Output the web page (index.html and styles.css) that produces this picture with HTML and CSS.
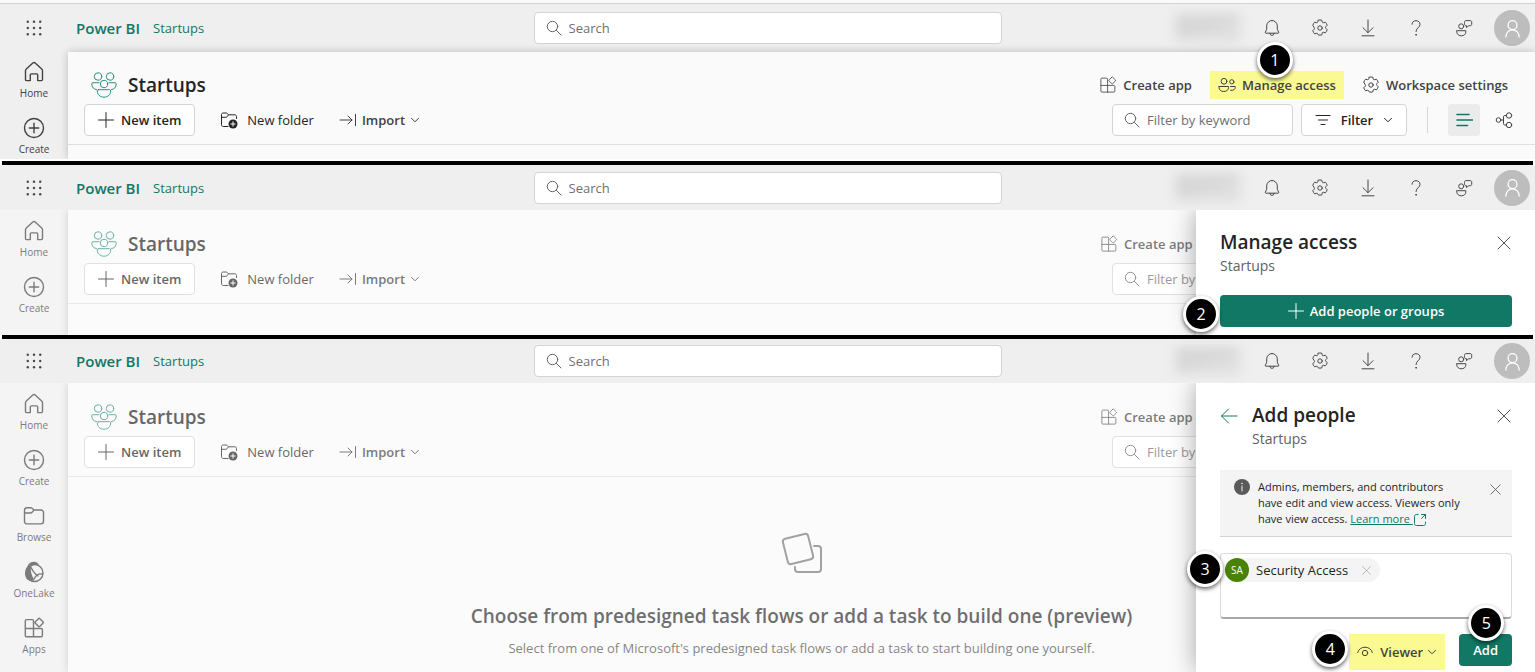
FILE: index.html
```html
<!DOCTYPE html>
<html lang="en">
<head>
    <meta charset="UTF-8">
    <meta name="viewport" content="width=device-width, initial-scale=1.0">
    <title>Power BI - Manage access</title>
    <link rel="stylesheet" href="styles.css">
</head>
<body>
    <!-- Shared icons -->
    <svg class="sprite" aria-hidden="true">
        <symbol id="i-waffle" viewBox="0 0 16 16"><g fill="currentColor" stroke="none"><circle cx="1.8" cy="1.8" r="1.2"/><circle cx="8" cy="1.8" r="1.2"/><circle cx="14.2" cy="1.8" r="1.2"/><circle cx="1.8" cy="8" r="1.2"/><circle cx="8" cy="8" r="1.2"/><circle cx="14.2" cy="8" r="1.2"/><circle cx="1.8" cy="14.2" r="1.2"/><circle cx="8" cy="14.2" r="1.2"/><circle cx="14.2" cy="14.2" r="1.2"/></g></symbol>
        <symbol id="i-search" viewBox="0 0 16 16"><circle cx="6.5" cy="6.5" r="5.2"/><path d="M10.4 10.4l4.6 4.6"/></symbol>
        <symbol id="i-bell" viewBox="0 0 18 18"><path d="M9 1.500a5.300 5.300 0 0 0-5.300 5.300v3.500L2.300 13.300c-.2.500 0 .9.600.9h12.200c.6 0 .8-.4.6-.9l-1.400-3V6.800A5.300 5.300 0 0 0 9 1.500zM6.900 14.300a2.100 2.100 0 0 0 4.200 0"/></symbol>
        <symbol id="i-gear" viewBox="0 0 18 18"><circle cx="9" cy="9" r="2.200"/><path d="M7.200 1.200Q9 .7 10.800 1.200L11.200 3q.3.900 1.300.7l1.900-.5q1.300 1.300 1.800 3.100l-1.400 1.400q-.7.800 0 1.500l1.400 1.500q-.5 1.800-1.800 3.100l-1.900-.5q-1-.2-1.300.7l-.4 1.900q-1.800.5-3.600 0L6.800 15q-.3-.9-1.300-.7l-1.900.5Q2.300 13.500 1.800 11.700l1.400-1.500q.7-.7 0-1.500L1.800 6.300Q2.300 4.500 3.600 3.200l1.900.5q1 .2 1.300-.7z"/></symbol>
        <symbol id="i-download" viewBox="0 0 18 18"><path d="M9 1v12.500M4 8.700l5 5 5-5M3 16.800h12"/></symbol>
        <symbol id="i-help" viewBox="0 0 18 18"><path d="M5 5.300C5 3 6.700 1.700 9 1.700s4 1.400 4 3.600c0 3.200-4 3.500-4 7.200"/><circle cx="9" cy="15.800" r=".4" fill="currentColor"/></symbol>
        <symbol id="i-feedback" viewBox="0 0 18 18"><circle cx="6.200" cy="7.300" r="2.500"/><path d="M1.800 11.700h9v1.500c0 2-1.900 3.600-4.500 3.600s-4.500-1.600-4.500-3.600zM9.500 3.200c0-1 .6-1.600 1.600-1.600h4c1 0 1.600.6 1.600 1.600v1.900c0 1-.6 1.600-1.600 1.600h-1.300l-2.300 1.900V6.700h-.4c-1 0-1.600-.6-1.600-1.600z"/></symbol>
        <symbol id="i-person" viewBox="0 0 20 20"><circle cx="10" cy="6.500" r="4.700"/><path d="M3 19c0-4.500 3-7.500 7-7.500s7 3 7 7.500"/></symbol>
        <symbol id="i-home" viewBox="0 0 22 22"><path d="M2.500 9.600c0-.7.300-1.200.8-1.600l6.500-5.900a1.800 1.800 0 0 1 2.400 0L18.700 8c.5.400.8.900.8 1.600v9c0 .6-.4 1-1 1h-3.800V14c0-.6-.5-1.100-1.100-1.100H8.400c-.6 0-1.100.5-1.100 1.100v5.600H3.500c-.6 0-1-.4-1-1z"/></symbol>
        <symbol id="i-create" viewBox="0 0 22 22"><circle cx="11" cy="11" r="9.500"/><path d="M11 6.300v9.400M6.300 11h9.400"/></symbol>
        <symbol id="i-folder" viewBox="0 0 22 22"><path d="M1.500 5.300A2.600 2.600 0 0 1 4.100 2.700h3.500c.6 0 1.100.2 1.500.6L11 5h6.900a2.600 2.600 0 0 1 2.600 2.600v8.700a2.600 2.600 0 0 1-2.600 2.600H4.100a2.600 2.600 0 0 1-2.600-2.600zM1.500 8h6c.6 0 1-.2 1.500-.6L11 5"/></symbol>
        <symbol id="i-onelake" viewBox="0 0 22 22"><circle cx="11.500" cy="12" r="8.500"/><path d="M5 19C1.500 16.500 1 10 4 6 5.500 2 9 .300 12.500 1c2 .5 3 1.500 3.500 3-3.200-.8-6-.3-8 2-.8 4 .5 8.500 3.500 13-2.500 1.300-4.500 1-6.500 0z" fill="currentColor" stroke="none"/><path d="M8 6.500c2 4 4.500 7 7 8.500M11.500 17.500c1.500-3.500 4.500-5 8-4.500"/></symbol>
        <symbol id="i-apps" viewBox="0 0 22 22"><path d="M10.500 19.700V3.800c0-.7-.5-1.200-1.200-1.200H3.500c-.7 0-1.200.5-1.200 1.200v14.700c0 .7.500 1.200 1.200 1.200h14.700c.7 0 1.200-.5 1.200-1.200v-5.800c0-.7-.5-1.200-1.200-1.200H2.300M15.400 1.700l-3 3c-.5.500-.5 1 0 1.500l3 3c.5.500 1 .5 1.500 0l3-3c.5-.5.5-1 0-1.500l-3-3c-.5-.5-1-.5-1.500 0z"/></symbol>
        <symbol id="i-team" viewBox="0 0 26 26"><circle cx="7" cy="4.500" r="3.700"/><circle cx="19" cy="4.500" r="3.700"/><circle cx="13" cy="12" r="3.700"/><path d="M8 10.700H2c-.8 0-1.200.4-1.200 1.200 0 3.300 1.700 5.300 4.700 5.700M18 10.700h6c.8 0 1.200.4 1.200 1.200 0 3.300-1.700 5.300-4.700 5.700M7.500 17.700h11c.7 0 1.200.4 1.200 1.200 0 3.500-2.700 6.300-6.700 6.300s-6.700-2.800-6.700-6.300c0-.8.500-1.200 1.200-1.200z"/></symbol>
        <symbol id="i-plus" viewBox="0 0 16 16"><path d="M8 .5v15M.5 8h15"/></symbol>
        <symbol id="i-newfolder" viewBox="0 0 18 18"><path d="M8 15.500H3.200c-1 0-1.700-.7-1.700-1.700V3.700c0-1 .7-1.700 1.700-1.700H6c.5 0 .9.200 1.200.5l1.300 1.300h6.300c1 0 1.700.7 1.700 1.700v2M1.500 6.300h4.300c.5 0 .9-.2 1.200-.5l1.500-2"/><circle cx="13" cy="13" r="4.500" fill="currentColor" stroke="none"/><path d="M13 10.800v4.400M10.800 13h4.400" stroke="#fafafa"/></symbol>
        <symbol id="i-import" viewBox="0 0 18 18"><path d="M1 9h12M9 5l4 4-4 4M16.500 3.500v11"/></symbol>
        <symbol id="i-chevron" viewBox="0 0 10 10"><path d="M1.500 3.300L5 6.800l3.500-3.500"/></symbol>
        <symbol id="i-people" viewBox="0 0 18 18"><circle cx="6" cy="5.300" r="2.900"/><circle cx="13.800" cy="5.800" r="2.100"/><path d="M1 10.500h9.500v1.200c0 2.300-2 3.800-4.700 3.800S1 14 1 11.700zM12.500 10.500h4.700v1c0 1.900-1.700 3.300-4.700 2.800"/></symbol>
        <symbol id="i-filter" viewBox="0 0 16 16"><path d="M1 3.500h14M3.500 8h9M6 12.500h4"/></symbol>
        <symbol id="i-list" viewBox="0 0 18 18"><path d="M2 3.500h12M2 9h15.500M2 14.500h10.500"/></symbol>
        <symbol id="i-lineage" viewBox="0 0 18 18"><circle cx="3.500" cy="9" r="2.300"/><circle cx="14" cy="4.500" r="2.700"/><circle cx="14" cy="14" r="2.700"/><path d="M11.300 4.500H9.800c-.8 0-1.300.5-1.300 1.300v6.900c0 .8.500 1.300 1.300 1.300h1.500M5.800 9h2.700"/></symbol>
        <symbol id="i-close" viewBox="0 0 14 14"><path d="M1 1l12 12M13 1L1 13"/></symbol>
        <symbol id="i-back" viewBox="0 0 18 18"><path d="M17 9H1.500M8.500 2l-7 7 7 7"/></symbol>
        <symbol id="i-info" viewBox="0 0 16 16"><circle cx="8" cy="8" r="8" fill="currentColor" stroke="none"/><path d="M8 7v5" stroke="#f4f4f4"/><circle cx="8" cy="4.500" r=".8" fill="#f4f4f4" stroke="none"/></symbol>
        <symbol id="i-external" viewBox="0 0 14 14"><path d="M5 1.500H3.300c-1 0-1.800.8-1.800 1.800v7.400c0 1 .8 1.800 1.800 1.800h7.400c1 0 1.800-.8 1.800-1.800V9M8.500 1.500h4v4M12.500 1.500l-4 4"/></symbol>
        <symbol id="i-eye" viewBox="0 0 16 16"><path d="M.7 8.500C1.500 5.300 4.400 3.200 8 3.200s6.500 2.100 7.300 5.300"/><circle cx="8" cy="9" r="2.700"/></symbol>
        <symbol id="i-flow" viewBox="0 0 42 42"><rect x="4" y="4" width="26" height="26" rx="3" transform="rotate(-14 17 17)"/><path d="M33 14h4c2 0 3 1 3 3v20c0 2-1 3-3 3H17c-2 0-3-1-3-3v-2"/></symbol>
    </svg>

    <div class="page">
        <!-- Step 1: open manage access -->
        <section class="shot shot-first">
            <header class="topbar">
                <div class="brand">
                    <button class="icon-btn waffle" aria-label="Apps menu"><svg><use href="#i-waffle"/></svg></button>
                    <a class="logo" href="#">Power BI</a>
                    <a class="crumb" href="#">Startups</a>
                </div>
                <label class="search"><svg><use href="#i-search"/></svg><input type="text" placeholder="Search" aria-label="Search"></label>
                <div class="top-actions">
                    <span class="tenant"></span>
                    <button class="icon-btn" aria-label="Notifications"><svg><use href="#i-bell"/></svg></button>
                    <button class="icon-btn" aria-label="Settings"><svg><use href="#i-gear"/></svg></button>
                    <button class="icon-btn" aria-label="Download"><svg><use href="#i-download"/></svg></button>
                    <button class="icon-btn" aria-label="Help"><svg><use href="#i-help"/></svg></button>
                    <button class="icon-btn" aria-label="Feedback"><svg><use href="#i-feedback"/></svg></button>
                    <button class="icon-btn" aria-label="Account"><span class="avatar"><svg><use href="#i-person"/></svg></span></button>
                </div>
            </header>
            <div class="body">
                <nav class="rail">
                    <a href="#"><svg><use href="#i-home"/></svg>Home</a>
                    <a href="#"><svg><use href="#i-create"/></svg>Create</a>
                </nav>
                <main class="workspace">
                    <div class="title-row">
                        <svg class="team"><use href="#i-team"/></svg>
                        <h1>Startups</h1>
                        <div class="title-actions">
                            <button class="link-btn"><svg><use href="#i-apps"/></svg>Create app</button>
                            <button class="link-btn highlight"><svg><use href="#i-people"/></svg>Manage access<span class="step step-1">1</span></button>
                            <button class="link-btn"><svg><use href="#i-gear"/></svg>Workspace settings</button>
                        </div>
                    </div>
                    <div class="toolbar">
                        <button class="box-btn"><svg><use href="#i-plus"/></svg>New item</button>
                        <button class="flat-btn regular"><svg><use href="#i-newfolder"/></svg>New folder</button>
                        <button class="flat-btn import"><svg><use href="#i-import"/></svg>Import<svg class="chev"><use href="#i-chevron"/></svg></button>
                        <div class="tools">
                            <label class="keyword"><svg><use href="#i-search"/></svg><input type="text" placeholder="Filter by keyword" aria-label="Filter by keyword"></label>
                            <button class="box-btn filter"><svg><use href="#i-filter"/></svg>Filter<svg class="chev"><use href="#i-chevron"/></svg></button>
                            <span class="sep"></span>
                            <button class="view-btn active" aria-label="List view"><svg><use href="#i-list"/></svg></button>
                            <button class="view-btn" aria-label="Lineage view"><svg><use href="#i-lineage"/></svg></button>
                        </div>
                    </div>
                </main>
            </div>
        </section>

        <hr class="divider">

        <!-- Step 2: manage access panel -->
        <section class="shot shot-second">
            <header class="topbar">
                <div class="brand">
                    <button class="icon-btn waffle" aria-label="Apps menu"><svg><use href="#i-waffle"/></svg></button>
                    <a class="logo" href="#">Power BI</a>
                    <a class="crumb" href="#">Startups</a>
                </div>
                <label class="search"><svg><use href="#i-search"/></svg><input type="text" placeholder="Search" aria-label="Search"></label>
                <div class="top-actions">
                    <span class="tenant"></span>
                    <button class="icon-btn" aria-label="Notifications"><svg><use href="#i-bell"/></svg></button>
                    <button class="icon-btn" aria-label="Settings"><svg><use href="#i-gear"/></svg></button>
                    <button class="icon-btn" aria-label="Download"><svg><use href="#i-download"/></svg></button>
                    <button class="icon-btn" aria-label="Help"><svg><use href="#i-help"/></svg></button>
                    <button class="icon-btn" aria-label="Feedback"><svg><use href="#i-feedback"/></svg></button>
                    <button class="icon-btn" aria-label="Account"><span class="avatar"><svg><use href="#i-person"/></svg></span></button>
                </div>
            </header>
            <div class="body dimmed">
                <nav class="rail">
                    <a href="#"><svg><use href="#i-home"/></svg>Home</a>
                    <a href="#"><svg><use href="#i-create"/></svg>Create</a>
                </nav>
                <main class="workspace">
                    <div class="title-row">
                        <svg class="team"><use href="#i-team"/></svg>
                        <h1>Startups</h1>
                        <div class="title-actions behind">
                            <button class="link-btn"><svg><use href="#i-apps"/></svg>Create app</button>
                        </div>
                    </div>
                    <div class="toolbar">
                        <button class="box-btn"><svg><use href="#i-plus"/></svg>New item</button>
                        <button class="flat-btn regular"><svg><use href="#i-newfolder"/></svg>New folder</button>
                        <button class="flat-btn import"><svg><use href="#i-import"/></svg>Import<svg class="chev"><use href="#i-chevron"/></svg></button>
                        <div class="tools behind">
                            <label class="keyword"><svg><use href="#i-search"/></svg><input type="text" placeholder="Filter by keyword" aria-label="Filter by keyword"></label>
                        </div>
                    </div>
                </main>
                <aside class="panel">
                    <div class="panel-head">
                        <div>
                            <h2>Manage access</h2>
                            <p>Startups</p>
                        </div>
                        <button class="close" aria-label="Close"><svg><use href="#i-close"/></svg></button>
                    </div>
                    <button class="primary wide"><svg><use href="#i-plus"/></svg>Add people or groups<span class="step step-2">2</span></button>
                </aside>
            </div>
        </section>

        <hr class="divider">

        <!-- Step 3: add people panel -->
        <section class="shot shot-third">
            <header class="topbar">
                <div class="brand">
                    <button class="icon-btn waffle" aria-label="Apps menu"><svg><use href="#i-waffle"/></svg></button>
                    <a class="logo" href="#">Power BI</a>
                    <a class="crumb" href="#">Startups</a>
                </div>
                <label class="search"><svg><use href="#i-search"/></svg><input type="text" placeholder="Search" aria-label="Search"></label>
                <div class="top-actions">
                    <span class="tenant"></span>
                    <button class="icon-btn" aria-label="Notifications"><svg><use href="#i-bell"/></svg></button>
                    <button class="icon-btn" aria-label="Settings"><svg><use href="#i-gear"/></svg></button>
                    <button class="icon-btn" aria-label="Download"><svg><use href="#i-download"/></svg></button>
                    <button class="icon-btn" aria-label="Help"><svg><use href="#i-help"/></svg></button>
                    <button class="icon-btn" aria-label="Feedback"><svg><use href="#i-feedback"/></svg></button>
                    <button class="icon-btn" aria-label="Account"><span class="avatar"><svg><use href="#i-person"/></svg></span></button>
                </div>
            </header>
            <div class="body dimmed">
                <nav class="rail">
                    <a href="#"><svg><use href="#i-home"/></svg>Home</a>
                    <a href="#"><svg><use href="#i-create"/></svg>Create</a>
                    <a href="#"><svg><use href="#i-folder"/></svg>Browse</a>
                    <a href="#"><svg><use href="#i-onelake"/></svg>OneLake</a>
                    <a href="#"><svg><use href="#i-apps"/></svg>Apps</a>
                </nav>
                <main class="workspace">
                    <div class="title-row">
                        <svg class="team"><use href="#i-team"/></svg>
                        <h1>Startups</h1>
                        <div class="title-actions behind">
                            <button class="link-btn"><svg><use href="#i-apps"/></svg>Create app</button>
                        </div>
                    </div>
                    <div class="toolbar">
                        <button class="box-btn"><svg><use href="#i-plus"/></svg>New item</button>
                        <button class="flat-btn regular"><svg><use href="#i-newfolder"/></svg>New folder</button>
                        <button class="flat-btn import"><svg><use href="#i-import"/></svg>Import<svg class="chev"><use href="#i-chevron"/></svg></button>
                        <div class="tools behind">
                            <label class="keyword"><svg><use href="#i-search"/></svg><input type="text" placeholder="Filter by keyword" aria-label="Filter by keyword"></label>
                        </div>
                    </div>
                    <div class="empty">
                        <svg><use href="#i-flow"/></svg>
                        <h3>Choose from predesigned task flows or add a task to build one (preview)</h3>
                        <p>Select from one of Microsoft's predesigned task flows or add a task to start building one yourself.</p>
                    </div>
                </main>
                <aside class="panel">
                    <div class="panel-head">
                        <button class="back" aria-label="Back"><svg><use href="#i-back"/></svg></button>
                        <div>
                            <h2>Add people</h2>
                            <p>Startups</p>
                        </div>
                        <button class="close" aria-label="Close"><svg><use href="#i-close"/></svg></button>
                    </div>
                    <div class="notice">
                        <svg class="info"><use href="#i-info"/></svg>
                        <p>Admins, members, and contributors<br>have edit and view access. Viewers only<br>have view access. <a href="#">Learn more <svg><use href="#i-external"/></svg></a></p>
                        <button class="close small" aria-label="Dismiss"><svg><use href="#i-close"/></svg></button>
                    </div>
                    <div class="people">
                        <span class="chip"><span class="initials">SA</span>Security Access<button aria-label="Remove"><svg><use href="#i-close"/></svg></button></span>
                        <input type="text" aria-label="Add people">
                        <span class="step step-3">3</span>
                    </div>
                    <div class="panel-foot">
                        <label class="role highlight">
                            <svg><use href="#i-eye"/></svg>
                            <select aria-label="Role"><option>Viewer</option></select>
                            <svg class="chev"><use href="#i-chevron"/></svg>
                            <span class="step step-4">4</span>
                        </label>
                        <button class="primary">Add<span class="step step-5">5</span></button>
                    </div>
                </aside>
            </div>
        </section>
    </div>
</body>
</html>
```
FILE: styles.css
```css
* {
    box-sizing: border-box;
}
body {
    margin: 0;
    background-color: #fff;
    font-family: "Open Sans", "Noto Sans", sans-serif;
    font-size: 13px;
    line-height: 20px;
    color: #242424;
}
h1, h2, h3, p {
    margin: 0;
}
h1, h2, h3 {
    font-size: 19px;
    line-height: 28px;
    font-weight: 600;
}
a {
    color: inherit;
    text-decoration: none;
}
button, input, select {
    font: inherit;
    color: inherit;
    border: 0;
    padding: 0;
    margin: 0;
    background: none;
    outline: 0;
}
button {
    display: flex;
    align-items: center;
    justify-content: center;
    white-space: nowrap;
    position: relative;
    cursor: pointer;
}
svg {
    display: block;
    width: 16px;
    height: 16px;
    flex: none;
    fill: none;
    stroke: currentColor;
    stroke-width: 1;
    stroke-linecap: round;
    stroke-linejoin: round;
}
.sprite {
    position: absolute;
    width: 0;
    height: 0;
}
.page {
    display: flex;
    flex-direction: column;
    height: 100vh;
    overflow: hidden;
}
.shot {
    display: flex;
    flex-direction: column;
    overflow: hidden;
    background-color: #efefef;
}
.shot-first {
    flex: 0 0 159px;
    margin-bottom: 2px;
    border-top: 3px solid #fafafa;
}
.shot-second {
    flex: 0 0 170px;
}
.shot-third {
    flex: 1;
}
.divider {
    flex: none;
    width: auto;
    height: 4px;
    margin: 0 2px;
    border: 0;
    background-color: #000;
}

/* Top bar */
.topbar {
    flex: 0 0 45px;
    display: grid;
    grid-template-columns: 1fr 468px 1fr;
    align-items: center;
}
.shot-first .topbar {
    flex-basis: 49px;
    border-top: 1px solid #d2d2d2;
}
.shot-third .topbar {
    flex-basis: 44px;
}
.brand, .top-actions {
    display: flex;
    align-items: center;
}
.brand {
    color: #117865;
}
.icon-btn {
    width: 48px;
    height: 40px;
    color: #484848;
}
.icon-btn svg {
    width: 18px;
    height: 18px;
}
.icon-btn.waffle {
    width: 68px;
}
.waffle svg {
    width: 16px;
    height: 16px;
}
.logo {
    margin: 0 13px 0 8px;
    font-size: 15px;
    font-weight: 600;
}
.search, .keyword {
    display: flex;
    align-items: center;
    gap: 7px;
    height: 32px;
    padding: 0 11px;
    border: 1px solid #d4d4d4;
    border-radius: 4px;
    background-color: #fff;
    color: #616161;
}
.search input, .keyword input {
    flex: 1;
    min-width: 0;
}
::placeholder {
    color: #707070;
    opacity: 1;
}
.top-actions {
    justify-content: flex-end;
}
.top-actions .icon-btn:last-child {
    margin-right: -1px;
}
.tenant {
    width: 64px;
    height: 28px;
    margin-right: 8px;
    background: linear-gradient(165deg, #d6d6d6 45%, #dfdfdf 60%);
    filter: blur(6px);
}
.avatar {
    display: flex;
    align-items: center;
    justify-content: center;
    width: 36px;
    height: 36px;
    border-radius: 50%;
    background-color: #bdbdbd;
    color: #fff;
}
.avatar svg {
    width: 19px;
    height: 19px;
    stroke-width: 1.3;
}

/* Left rail and workspace */
.body {
    flex: 1;
    min-height: 0;
    display: flex;
    position: relative;
}
.dimmed {
    overflow: hidden;
}
.dimmed::after {
    content: "";
    position: absolute;
    inset: 0;
    background-color: rgba(255, 255, 255, 0.3);
}
.rail {
    flex: 0 0 68px;
    color: #424242;
}
.rail a {
    display: flex;
    flex-direction: column;
    align-items: center;
    gap: 2px;
    padding: 9px 0 7px;
    font-size: 10px;
    line-height: 16px;
}
.rail svg {
    width: 22px;
    height: 22px;
    stroke-width: 1.4;
}
.workspace {
    flex: 1;
    min-width: 0;
    background-color: #fafafa;
    box-shadow: 0 0 8px rgba(0, 0, 0, 0.22);
}
.dimmed .rail, .dimmed .workspace {
    padding-top: 1px;
}
.title-row {
    display: flex;
    align-items: center;
    gap: 11px;
    height: 52px;
    padding: 13px 19px 0 23px;
}
.team {
    width: 26px;
    height: 26px;
    color: #2a9080;
}
.title-actions, .tools {
    display: flex;
    align-items: center;
    gap: 8px;
    margin-left: auto;
}
.title-actions {
    gap: 10px;
}
.link-btn {
    gap: 6px;
    height: 28px;
    padding: 0 8px;
    font-weight: 600;
    color: #424242;
}
.link-btn svg {
    width: 18px;
    height: 18px;
}
.highlight {
    background-color: #fbfa92;
}
.toolbar {
    display: flex;
    align-items: center;
    height: 41px;
    padding: 0 15px 8px 16px;
    border-bottom: 1px solid #e0e0e0;
}
.box-btn {
    gap: 7px;
    height: 32px;
    padding: 0 13px;
    border: 1px solid #d4d4d4;
    border-radius: 4px;
    background-color: #fff;
    font-weight: 600;
}
.flat-btn {
    gap: 5px;
    margin-left: 25px;
    font-weight: 600;
    color: #424242;
}
.flat-btn svg {
    width: 18px;
    height: 18px;
}
.flat-btn.regular {
    gap: 9px;
    font-weight: 400;
    color: #242424;
}
button .chev, .role .chev {
    width: 10px;
    height: 10px;
}
.keyword {
    width: 181px;
}
.filter {
    width: 106px;
    gap: 10px;
}
.sep {
    width: 1px;
    height: 26px;
    margin: 0 12px;
    background-color: #d6d6d6;
}
.view-btn {
    width: 32px;
    height: 32px;
    border-radius: 4px;
    color: #424242;
}
.view-btn svg {
    width: 18px;
    height: 18px;
}
.view-btn.active {
    background-color: #ebebeb;
    color: #117865;
}
.view-btn.active svg {
    stroke-width: 1.6;
}
/* controls that run on underneath the open panel */
.title-actions.behind {
    width: 424px;
}
.tools.behind {
    width: 408px;
}
.empty {
    display: flex;
    flex-direction: column;
    align-items: center;
    padding-top: 55px;
    text-align: center;
}
.empty svg {
    width: 42px;
    height: 42px;
    margin-bottom: 28px;
    stroke-width: 2;
    color: #7a7a7a;
}
.empty h3 {
    color: #303030;
    margin-bottom: 8px;
}
.empty p {
    color: #505050;
}

/* Side panel */
.panel {
    position: absolute;
    z-index: 1;
    top: 0;
    right: 0;
    bottom: 0;
    width: 339px;
    padding: 18px 23px 0 24px;
    background-color: #fff;
    box-shadow: 0 0 24px rgba(0, 0, 0, 0.35);
}
.panel-head {
    display: flex;
    align-items: flex-start;
    margin-bottom: 19px;
}
.panel-head p {
    font-size: 14px;
    color: #616161;
}
.close, .back {
    height: 30px;
    color: #505050;
}
.close {
    margin-left: auto;
    padding: 0 1px;
}
.close svg {
    width: 14px;
    height: 14px;
}
.back {
    margin-right: 14px;
    color: #117865;
}
.back svg {
    width: 18px;
    height: 18px;
}
.primary {
    height: 32px;
    padding: 0 14px;
    border-radius: 4px;
    background-color: #117865;
    color: #fff;
    font-weight: 600;
}
.wide {
    width: 100%;
    gap: 6px;
}
.notice {
    display: flex;
    align-items: flex-start;
    gap: 8px;
    padding: 9px 10px 9px 14px;
    margin: 21px 0 16px;
    border-bottom: 1px solid #d4d4d4;
    background-color: #f4f4f4;
    font-size: 11px;
    line-height: 16px;
}
.panel-head:has(+ .notice) {
    margin-bottom: 0;
}
.notice p {
    flex: 1;
}
.notice a {
    color: #117865;
    text-decoration: underline;
    white-space: nowrap;
}
.notice a svg {
    display: inline-block;
    width: 14px;
    height: 14px;
    vertical-align: middle;
}
.info {
    color: #5a5a5a;
}
.close.small {
    height: 20px;
}
.close.small svg {
    width: 11px;
    height: 11px;
}
.people {
    position: relative;
    display: flex;
    align-items: flex-start;
    height: 66px;
    padding: 4px;
    margin-bottom: 15px;
    border: 1px solid #dcdcdc;
    border-bottom: 2px solid #a8a8a8;
    border-radius: 4px;
}
.people input {
    flex: 1;
    min-width: 0;
    height: 24px;
}
.chip {
    display: flex;
    align-items: center;
    height: 24px;
    padding-right: 9px;
    border-radius: 12px;
    background-color: #f4f4f4;
    white-space: nowrap;
}
.chip svg {
    width: 9px;
    height: 9px;
    margin-left: 14px;
    color: #9a9a9a;
}
.initials {
    width: 24px;
    height: 24px;
    margin-right: 7px;
    border-radius: 50%;
    background-color: #498205;
    color: #fff;
    font-size: 10px;
    line-height: 24px;
    text-align: center;
}
.panel-foot {
    display: flex;
    justify-content: flex-end;
    gap: 14px;
}
.role {
    position: relative;
    display: flex;
    align-items: center;
    gap: 7px;
    height: 36px;
    padding: 0 8px;
    font-weight: 600;
    color: #424242;
}
.role .chev {
    margin-left: -3px;
}
.role select {
    appearance: none;
}

/* Numbered step markers */
.step {
    position: absolute;
    width: 36px;
    height: 36px;
    border: 3px solid #fff;
    border-radius: 50%;
    background-color: #000;
    box-shadow: 0 2px 4px rgba(0, 0, 0, 0.6);
    color: #fff;
    font-size: 16px;
    font-weight: 400;
    line-height: 30px;
    text-align: center;
}
.step-1 {
    left: 47px;
    top: -29px;
}
.step-2 {
    left: -37px;
    top: 1px;
}
.step-3 {
    left: -34px;
    top: -3px;
}
.step-4 {
    left: -37px;
    top: -3px;
}
.step-5 {
    left: 9px;
    top: -29px;
}
```
